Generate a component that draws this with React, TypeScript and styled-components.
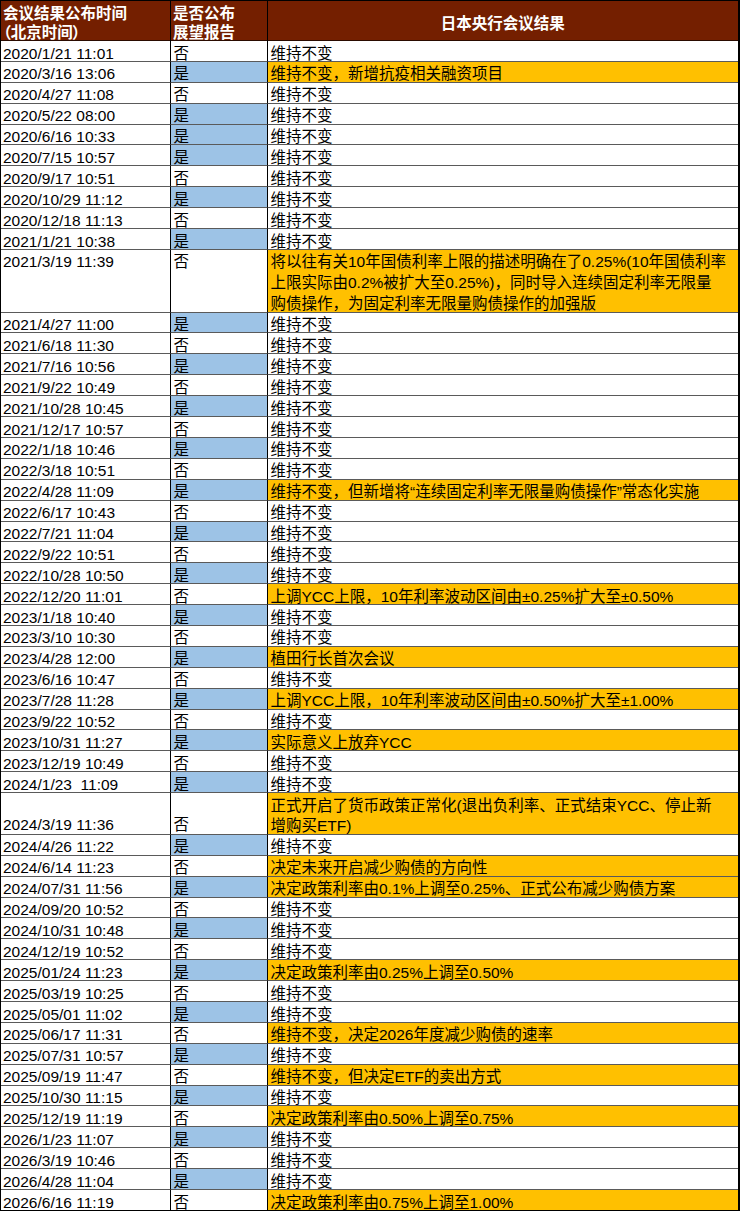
import React from 'react';
import styled, { createGlobalStyle } from 'styled-components';

type Flag = '是' | '否';

type Meeting = {
  date: string;
  flag: Flag;
  result: string[];
  lines?: number;
  align?: 'top' | 'bottom';
};

const ROW_HEIGHT = 20.9;
const UNCHANGED = '维持不变';

const GlobalStyle = createGlobalStyle`
  html, body {
    margin: 0;
    padding: 0;
    background: #ffffff;
  }
  body {
    font-family: "Liberation Sans", Arial, "Noto Sans CJK SC", sans-serif;
    font-size: 15.5px;
    color: #000;
  }
`;

const Table = styled.div`
  width: 739.5px;
  box-sizing: border-box;
  border-top: 1px solid #000;
  border-left: 1px solid #000;
  border-right: 2px solid #000;
`;

const HeaderRow = styled.div`
  display: grid;
  grid-template-columns: 170px 97px 1fr;
  height: 40px;
  background: #741f00;
  border-bottom: 1px solid #2a0b00;
  box-sizing: border-box;
`;

const HeaderCell = styled.div<{ $center?: boolean }>`
  box-sizing: border-box;
  padding: ${(p) => (p.$center ? '12.5px 0 0' : '3px 2px 0')};
  border-right: 1px solid #000;
  color: #ffffff;
  font-weight: 700;
  line-height: 19.3px;
  text-align: ${(p) => (p.$center ? 'center' : 'left')};
  white-space: nowrap;
  font-feature-settings: "palt";

  &:last-child {
    border-right: none;
  }
`;

const Row = styled.div<{ $lines: number }>`
  display: grid;
  grid-template-columns: 170px 97px 1fr;
  height: ${(p) => p.$lines * ROW_HEIGHT}px;

  &:last-child > div {
    border-bottom-color: #000;
  }
`;

const Cell = styled.div<{ $align?: 'top' | 'bottom' }>`
  box-sizing: border-box;
  display: flex;
  flex-direction: column;
  justify-content: ${(p) => (p.$align === 'bottom' ? 'flex-end' : 'flex-start')};
  padding: 2.5px 0 0 2.5px;
  border-right: 1px solid #000;
  border-bottom: 1px solid #5a5a5a;
  line-height: ${ROW_HEIGHT}px;
  white-space: pre;
  overflow: hidden;
`;

const DateCell = styled(Cell)`
  padding-left: 2px;
`;

const FlagCell = styled(Cell)<{ $yes: boolean }>`
  background: ${(p) => (p.$yes ? '#9dc3e6' : '#ffffff')};
`;

const ResultCell = styled(Cell)<{ $highlight: boolean }>`
  background: ${(p) => (p.$highlight ? '#ffc000' : '#ffffff')};
  border-right: none;
`;

const Text = styled.div`
  margin-bottom: -2.5px;
`;

const m = (date: string, flag: Flag, result: string | string[] = UNCHANGED, extra: Partial<Meeting> = {}): Meeting => ({
  date,
  flag,
  result: Array.isArray(result) ? result : [result],
  ...extra,
});

const meetings: Meeting[] = [
  m('2020/1/21 11:01', '否'),
  m('2020/3/16 13:06', '是', '维持不变，新增抗疫相关融资项目'),
  m('2020/4/27 11:08', '否'),
  m('2020/5/22 08:00', '是'),
  m('2020/6/16 10:33', '是'),
  m('2020/7/15 10:57', '是'),
  m('2020/9/17 10:51', '否'),
  m('2020/10/29 11:12', '是'),
  m('2020/12/18 11:13', '否'),
  m('2021/1/21 10:38', '是'),
  m(
    '2021/3/19 11:39',
    '否',
    [
      '将以往有关10年国债利率上限的描述明确在了0.25%(10年国债利率',
      '上限实际由0.2%被扩大至0.25%)，同时导入连续固定利率无限量',
      '购债操作，为固定利率无限量购债操作的加强版',
    ],
    { lines: 3, align: 'top' }
  ),
  m('2021/4/27 11:00', '是'),
  m('2021/6/18 11:30', '否'),
  m('2021/7/16 10:56', '是'),
  m('2021/9/22 10:49', '否'),
  m('2021/10/28 10:45', '是'),
  m('2021/12/17 10:57', '否'),
  m('2022/1/18 10:46', '是'),
  m('2022/3/18 10:51', '否'),
  m('2022/4/28 11:09', '是', '维持不变，但新增将“连续固定利率无限量购债操作”常态化实施'),
  m('2022/6/17 10:43', '否'),
  m('2022/7/21 11:04', '是'),
  m('2022/9/22 10:51', '否'),
  m('2022/10/28 10:50', '是'),
  m('2022/12/20 11:01', '否', '上调YCC上限，10年利率波动区间由±0.25%扩大至±0.50%'),
  m('2023/1/18 10:40', '是'),
  m('2023/3/10 10:30', '否'),
  m('2023/4/28 12:00', '是', '植田行长首次会议'),
  m('2023/6/16 10:47', '否'),
  m('2023/7/28 11:28', '是', '上调YCC上限，10年利率波动区间由±0.50%扩大至±1.00%'),
  m('2023/9/22 10:52', '否'),
  m('2023/10/31 11:27', '是', '实际意义上放弃YCC'),
  m('2023/12/19 10:49', '否'),
  m('2024/1/23  11:09', '是'),
  m(
    '2024/3/19 11:36',
    '否',
    ['正式开启了货币政策正常化(退出负利率、正式结束YCC、停止新', '增购买ETF)'],
    { lines: 2, align: 'bottom' }
  ),
  m('2024/4/26 11:22', '是'),
  m('2024/6/14 11:23', '否', '决定未来开启减少购债的方向性'),
  m('2024/07/31 11:56', '是', '决定政策利率由0.1%上调至0.25%、正式公布减少购债方案'),
  m('2024/09/20 10:52', '否'),
  m('2024/10/31 10:48', '是'),
  m('2024/12/19 10:52', '否'),
  m('2025/01/24 11:23', '是', '决定政策利率由0.25%上调至0.50%'),
  m('2025/03/19 10:25', '否'),
  m('2025/05/01 11:02', '是'),
  m('2025/06/17 11:31', '否', '维持不变，决定2026年度减少购债的速率'),
  m('2025/07/31 10:57', '是'),
  m('2025/09/19 11:47', '否', '维持不变，但决定ETF的卖出方式'),
  m('2025/10/30 11:15', '是'),
  m('2025/12/19 11:19', '否', '决定政策利率由0.50%上调至0.75%'),
  m('2026/1/23 11:07', '是'),
  m('2026/3/19 10:46', '否'),
  m('2026/4/28 11:04', '是'),
  m('2026/6/16 11:19', '否', '决定政策利率由0.75%上调至1.00%'),
];

export default function App() {
  return (
    <>
      <GlobalStyle />
      <Table>
        <HeaderRow>
          <HeaderCell>
            会议结果公布时间
            <br />
            （北京时间）
          </HeaderCell>
          <HeaderCell>
            是否公布
            <br />
            展望报告
          </HeaderCell>
          <HeaderCell $center>日本央行会议结果</HeaderCell>
        </HeaderRow>
        {meetings.map((row) => {
          const lines = row.lines ?? 1;
          const align = row.align ?? 'top';
          const highlight = !(row.result.length === 1 && row.result[0] === UNCHANGED);
          return (
            <Row key={row.date} $lines={lines}>
              <DateCell $align={align}>
                <Text>{row.date}</Text>
              </DateCell>
              <FlagCell $align={align} $yes={row.flag === '是'}>
                <Text>{row.flag}</Text>
              </FlagCell>
              <ResultCell $highlight={highlight}>
                <Text>
                  {row.result.map((line) => (
                    <div key={line}>{line}</div>
                  ))}
                </Text>
              </ResultCell>
            </Row>
          );
        })}
      </Table>
    </>
  );
}
